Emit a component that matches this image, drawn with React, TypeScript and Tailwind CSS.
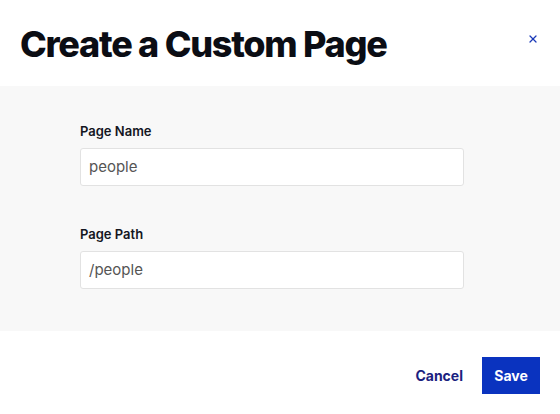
import { X } from 'lucide-react'

export default function App() {
  const fields = [
    { label: 'Page Name', value: 'people' },
    { label: 'Page Path', value: '/people' },
  ]

  return (
    <div className="w-[560px] h-[414px] bg-white flex flex-col font-['Inter',sans-serif]">
      <div className="h-[86px] flex items-center justify-between pl-5 pr-[20px]">
        <h1 className="text-[36px] font-extrabold tracking-[-0.035em] text-[#0b0d14] leading-none mt-[2px]">
          Create a Custom Page
        </h1>
        <button className="text-[#1a3ab8] -mt-[8px] mr-[1px]">
          <X className="w-[12px] h-[12px]" strokeWidth={2.5} />
        </button>
      </div>

      <div className="h-[245px] bg-[#f8f8f8] pl-20 pt-[37px] flex flex-col gap-[40px]">
        {fields.map((field) => (
          <div key={field.label} className="flex flex-col gap-[9px]">
            <label className="text-[13px] font-semibold text-[#14161f] leading-4">{field.label}</label>
            <div className="w-[384px] h-[38px] bg-white border border-[#e2e2e2] rounded-[3px] flex items-center px-[8px]">
              <span className="text-[15px] text-[#555]">{field.value}</span>
            </div>
          </div>
        ))}
      </div>

      <div className="flex-1 flex items-start justify-end pt-[26px] pr-5 gap-[19px]">
        <button className="h-[37px] text-[14px] font-bold text-[#1b2280]">Cancel</button>
        <button className="h-[37px] w-[58px] bg-[#0a33bf] text-white text-[14px] font-bold">Save</button>
      </div>
    </div>
  )
}
